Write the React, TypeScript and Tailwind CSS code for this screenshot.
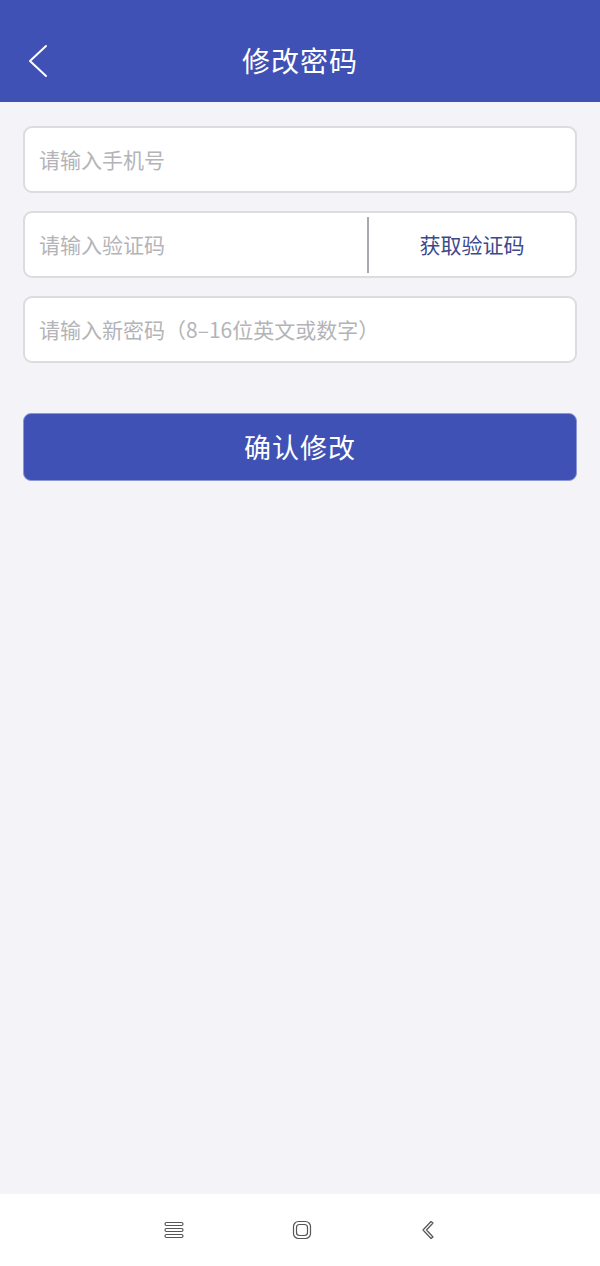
const font = { fontFamily: '"Noto Sans CJK SC", "Noto Sans", sans-serif' };

function Field({ placeholder }: { placeholder: string }) {
  return (
    <div className="h-[67px] rounded-[9px] border-2 border-[#dcdce0] bg-white flex items-center px-[14px]">
      <span className="text-[21px] text-[#b4b4b8]">{placeholder}</span>
    </div>
  );
}

export default function App() {
  return (
    <div className="w-[600px] h-[1266px] flex flex-col bg-[#f3f3f8]" style={font}>
      <header className="h-[102px] bg-[#3f51b5] text-white flex items-end pb-[17px] shrink-0">
        <div className="w-full flex items-center justify-center h-[50px] relative">
          <svg
            className="absolute left-[27px] top-[9px]"
            width="22"
            height="34"
            viewBox="0 0 22 34"
            fill="none"
            stroke="white"
            strokeWidth="2"
            strokeLinecap="round"
            strokeLinejoin="round"
          >
            <polyline points="19,2 3,17 19,32" />
          </svg>
          <h1 className="text-[28px] tracking-[1px]">修改密码</h1>
        </div>
      </header>

      <main className="flex-1 px-[23px] pt-[24px] flex flex-col">
        <div className="flex flex-col gap-[18px]">
          <Field placeholder="请输入手机号" />
          <div className="h-[67px] rounded-[9px] border-2 border-[#dcdce0] bg-white flex items-center">
            <span className="flex-1 px-[14px] text-[21px] text-[#b4b4b8]">请输入验证码</span>
            <div className="w-[2px] h-[56px] bg-[#a8a8ae]" />
            <button className="w-[206px] text-[21px] text-[#3c4a8c] text-center">获取验证码</button>
          </div>
          <Field placeholder="请输入新密码（8–16位英文或数字）" />
        </div>

        <button className="mt-[50px] h-[68px] rounded-[8px] bg-[#3f51b5] border border-[#8c96d4] text-white text-[27px] tracking-[1px]">
          确认修改
        </button>
      </main>

      <nav className="h-[72px] bg-white flex items-center justify-around px-[110px] shrink-0">
        <svg width="20" height="18" viewBox="0 0 20 18" fill="none" stroke="#555" strokeWidth="1.2">
          <rect x="1" y="1.5" width="18" height="3" rx="1.5" />
          <rect x="1" y="7.5" width="18" height="3" rx="1.5" />
          <rect x="1" y="13.5" width="18" height="3" rx="1.5" />
        </svg>
        <svg width="20" height="20" viewBox="0 0 20 20" fill="none" stroke="#555" strokeWidth="1.2">
          <rect x="1.5" y="1.5" width="17" height="17" rx="5" />
          <rect x="4.5" y="4.5" width="11" height="11" rx="3" />
        </svg>
        <svg width="16" height="20" viewBox="0 0 16 20" fill="none" stroke="#555" strokeWidth="1.2" strokeLinejoin="round">
          <path d="M11 1.5 L3 10 L11 18.5 L13 17 L6.5 10 L13 3 Z" />
        </svg>
      </nav>
    </div>
  );
}
